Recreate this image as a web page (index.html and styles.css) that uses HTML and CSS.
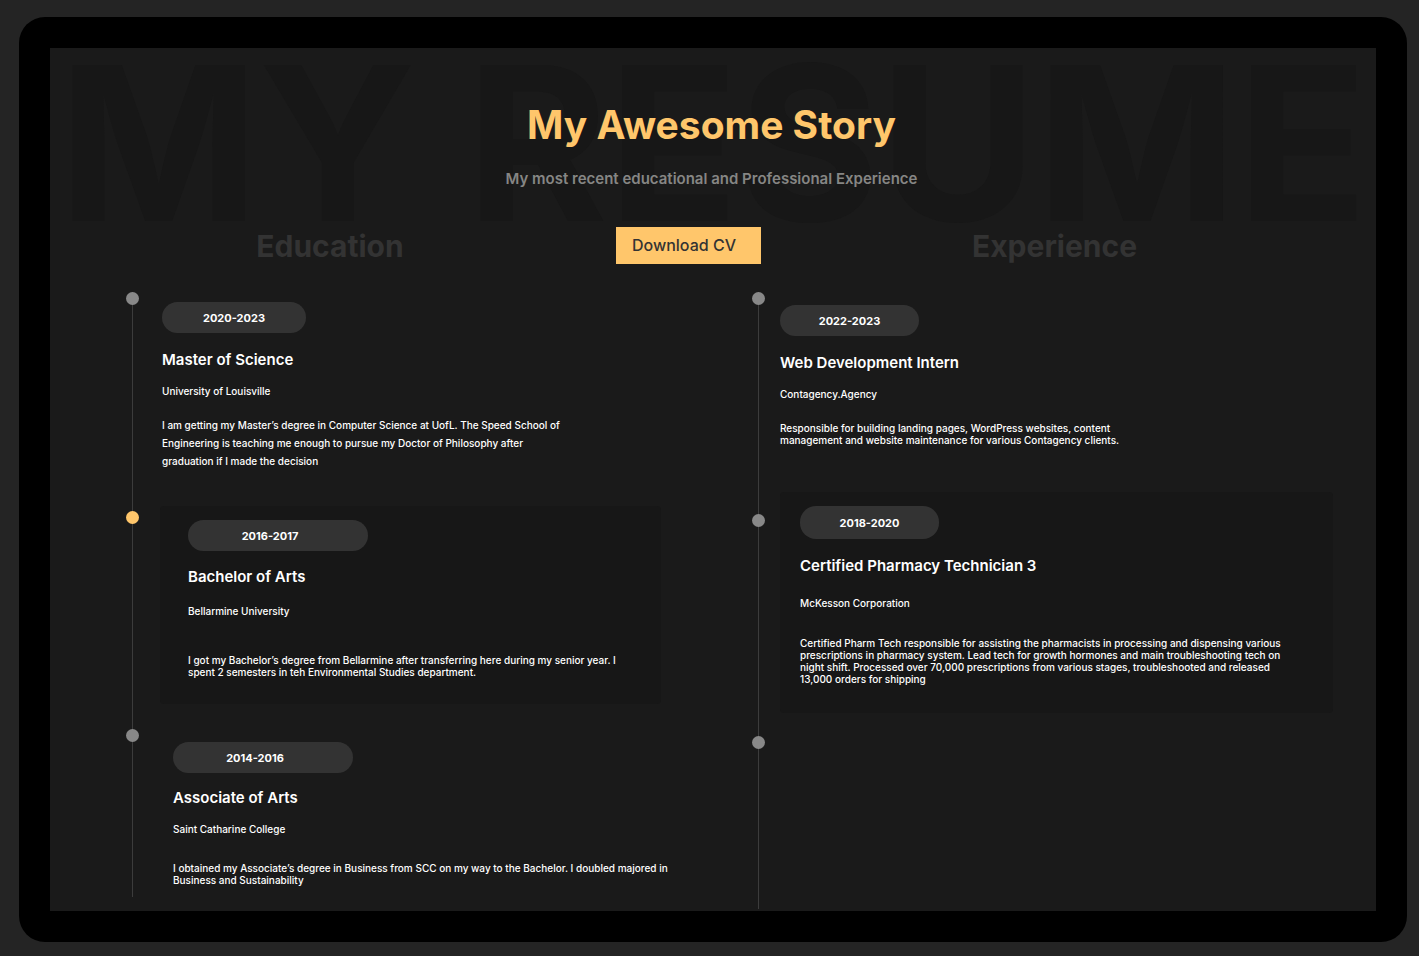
FILE: index.html
```html
<!DOCTYPE html>
<html lang="en">
<head>
  <meta charset="UTF-8">
  <meta name="viewport" content="width=device-width, initial-scale=1">
  <title>My Resume</title>
  <link rel="stylesheet" href="styles.css">
</head>
<body>
  <div class="frame">
    <main class="screen">
      <header class="intro">
        <div class="backdrop">MY RESUME</div>
        <h1>My Awesome Story</h1>
        <p class="subtitle">My most recent educational and Professional Experience</p>
      </header>

      <div class="headings">
        <h2>Education</h2>
        <button type="button" class="download">Download CV</button>
        <h2 class="experience-heading">Experience</h2>
      </div>

      <div class="timelines">
        <ol class="timeline education">
          <li class="entry first">
            <div class="marker"><span class="dot"></span></div>
            <div class="content">
              <span class="years">2020-2023</span>
              <h3>Master of Science</h3>
              <p class="place">University of Louisville</p>
              <p class="description">I am getting my Master’s degree in Computer Science at UofL. The Speed School of Engineering is teaching me enough to pursue my Doctor of Philosophy after graduation if I made the decision</p>
            </div>
          </li>
          <li class="entry card">
            <div class="marker"><span class="dot active"></span></div>
            <div class="content">
              <span class="years wide">2016-2017</span>
              <h3>Bachelor of Arts</h3>
              <p class="place">Bellarmine University</p>
              <p class="description">I got my Bachelor’s degree from Bellarmine after transferring here during my senior year. I spent 2 semesters in teh Environmental Studies department.</p>
            </div>
          </li>
          <li class="entry last">
            <div class="marker"><span class="dot"></span></div>
            <div class="content">
              <span class="years wide">2014-2016</span>
              <h3>Associate of Arts</h3>
              <p class="place">Saint Catharine College</p>
              <p class="description">I obtained my Associate’s degree in Business from SCC on my way to the Bachelor. I doubled majored in Business and Sustainability</p>
            </div>
          </li>
        </ol>

        <ol class="timeline experience">
          <li class="entry first">
            <div class="marker"><span class="dot"></span></div>
            <div class="content">
              <span class="years">2022-2023</span>
              <h3>Web Development Intern</h3>
              <p class="place">Contagency.Agency</p>
              <p class="description">Responsible for building landing pages, WordPress websites, content management and website maintenance for various Contagency clients.</p>
            </div>
          </li>
          <li class="entry card">
            <div class="marker"><span class="dot"></span></div>
            <div class="content">
              <span class="years">2018-2020</span>
              <h3>Certified Pharmacy Technician 3</h3>
              <p class="place">McKesson Corporation</p>
              <p class="description">Certified Pharm Tech responsible for assisting the pharmacists in processing and dispensing various prescriptions in pharmacy system. Lead tech for growth hormones and main troubleshooting tech on night shift. Processed over 70,000 prescriptions from various stages, troubleshooted and released 13,000 orders for shipping</p>
            </div>
          </li>
          <li class="entry last">
            <div class="marker"><span class="dot"></span></div>
          </li>
        </ol>
      </div>
    </main>
  </div>
</body>
</html>
```
FILE: styles.css
```css
* {
  box-sizing: border-box;
}
body {
  display: flex;
  min-height: 100vh;
  margin: 0;
  padding: 17px 12px 14px 19px;
  background: #242424;
  color: #fff;
  font-family: Inter, "Liberation Sans", sans-serif;
}
h1, h2, h3, p, ol {
  margin: 0;
  padding: 0;
}
.frame {
  display: flex;
  flex: 1;
  min-width: 0;
  padding: 31px;
  background: #000;
  border-radius: 26px;
}
.screen {
  display: flex;
  flex-direction: column;
  flex: 1;
  min-width: 0;
  background: #1a1a1a;
}

/* Title with the oversized word behind it */
.intro {
  position: relative;
  padding: 53px 3px 0 0;
  text-align: center;
}
.backdrop {
  position: absolute;
  top: -36px;
  left: 0;
  right: 0;
  display: flex;
  justify-content: center;
  color: #171717;
  font-size: 215px;
  line-height: 262px;
  font-weight: 700;
  white-space: nowrap;
}
h1 {
  position: relative;
  color: #ffc66b;
  font-size: 39px;
  line-height: 48px;
  font-weight: 700;
}
.subtitle {
  position: relative;
  margin-top: 20px;
  color: #868684;
  font-size: 15px;
  line-height: 20px;
  font-weight: 600;
}

.headings {
  position: relative;
  display: grid;
  grid-template-columns: 566fr 145px 615fr;
  align-items: center;
  margin-top: 38px;
}
h2 {
  padding-right: 6px;
  color: #333;
  font-size: 30px;
  line-height: 36px;
  font-weight: 700;
  text-align: center;
}
.experience-heading {
  padding-right: 28px;
}
.download {
  height: 37px;
  padding: 0 28px 2px 16px;
  border: 0;
  background: #ffc66b;
  color: #333;
  font-family: inherit;
  font-size: 16px;
  font-weight: 500;
  text-align: left;
  white-space: nowrap;
  cursor: pointer;
}

/* Timelines */
.timelines {
  display: grid;
  grid-template-columns: 626fr 581fr;
  flex: 1;
  margin-top: 28px;
  padding: 0 43px 2px 76px;
}
.timeline {
  display: flex;
  flex-direction: column;
  list-style: none;
}
.entry {
  display: flex;
}
.marker {
  flex: none;
  width: 13px;
  background: linear-gradient(#3c3c3c, #3c3c3c) center / 1px 100% no-repeat;
}
.dot {
  display: block;
  height: 13px;
  background: #888;
  border-radius: 50%;
}
.dot.active {
  background: #ffc66b;
}
.years {
  display: flex;
  align-items: center;
  justify-content: center;
  width: 144px;
  height: 31px;
  background: #333;
  border-radius: 16px;
  font-size: 11px;
  font-weight: 700;
}
.years.wide {
  width: 180px;
  padding-right: 16px;
}
h3 {
  margin-top: 17px;
  font-size: 15px;
  line-height: 20px;
  font-weight: 600;
}
.place {
  margin-top: 14px;
  font-size: 10px;
  line-height: 14px;
  font-weight: 500;
}
.description {
  font-size: 10px;
  line-height: 12px;
  font-weight: 500;
}
.card .content {
  flex: 1;
  padding: 14px 28px 26px;
  background: #171717;
  border-radius: 4px;
}

.education .first .content {
  padding: 10px 0 36px 23px;
}
.education .first .description {
  max-width: 410px;
  margin-top: 18px;
  line-height: 18px;
}
.education .card h3 {
  margin-top: 16px;
}
.education .card .content {
  margin: 0 91px 0 21px;
}
.education .card .dot {
  margin-top: 5px;
}
.education .card .place {
  margin-top: 17px;
}
.education .card .description {
  margin-top: 36px;
}
.education .last .content {
  padding: 38px 40px 11px 34px;
}
.education .last .dot {
  margin-top: 25px;
}
.education .last h3 {
  margin-top: 15px;
}
.education .last .description {
  margin-top: 26px;
}

.experience .years {
  width: 139px;
}
.experience .first .content {
  padding: 13px 0 46px 15px;
}
.experience .first .description {
  max-width: 350px;
  margin-top: 21px;
}
.experience .card .content {
  margin-left: 15px;
  padding: 14px 40px 28px 20px;
}
.experience .card .years {
  height: 33px;
}
.experience .card .dot {
  margin-top: 22px;
}
.experience .card .place {
  margin-top: 20px;
}
.experience .card .description {
  margin-top: 27px;
}
.experience .last {
  flex: 1;
}
.experience .last .dot {
  margin-top: 23px;
}
```
